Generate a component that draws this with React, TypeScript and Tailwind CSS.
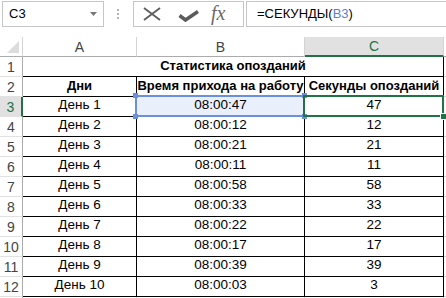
import React from "react";

const rows: [string, string, string][] = [
  ["День 1", "08:00:47", "47"],
  ["День 2", "08:00:12", "12"],
  ["День 3", "08:00:21", "21"],
  ["День 4", "08:00:11", "11"],
  ["День 5", "08:00:58", "58"],
  ["День 6", "08:00:33", "33"],
  ["День 7", "08:00:22", "22"],
  ["День 8", "08:00:17", "17"],
  ["День 9", "08:00:39", "39"],
  ["День 10", "08:00:03", "3"],
];

function RowHead({ n, active }: { n: number; active?: boolean }) {
  return (
    <div
      className={
        "w-[23px] shrink-0 flex items-center justify-center text-[14px] pt-[1px] border-b border-b-[#e1e1e1] " +
        (active
          ? "bg-[#e1e1e1] text-[#217346] border-r-2 border-r-[#217346]"
          : "bg-white text-[#444] border-r border-r-[#ababab]")
      }
    >
      {n}
    </div>
  );
}

export default function App() {
  return (
    <div className="w-[446px] h-[298px] overflow-hidden bg-white font-['Liberation_Sans',Arial,sans-serif] text-black">
      {/* toolbar */}
      <div className="flex h-[37px] items-start pt-[1px]">
        <div className="ml-[2px] w-[102px] h-[26px] border border-[#c6c6c6] flex items-center pl-[6px] pr-[6px]">
          <span className="text-[13px] text-black">C3</span>
          <svg className="ml-auto" width="7" height="4" viewBox="0 0 7 4">
            <path d="M0 0 L7 0 L3.5 4 Z" fill="#777" />
          </svg>
        </div>
        <div className="ml-[13px] mt-[8px] flex flex-col gap-[2px]">
          <div className="w-[2px] h-[2px] bg-[#b5b5b5]" />
          <div className="w-[2px] h-[2px] bg-[#b5b5b5]" />
          <div className="w-[2px] h-[2px] bg-[#b5b5b5]" />
        </div>
        <div className="ml-[14px] w-[111px] h-[26px] border border-[#c6c6c6] flex items-center">
          <svg className="ml-[8px]" width="20" height="14" viewBox="0 0 20 14">
            <path d="M2 1 L18 13 M18 1 L2 13" stroke="#5c5c5c" strokeWidth="1.8" />
          </svg>
          <svg className="ml-[16px] mt-[3px]" width="21" height="12" viewBox="0 0 21 12">
            <path d="M1.5 5.5 L7.5 10 L20 1.5" stroke="#5c5c5c" strokeWidth="3.6" fill="none" strokeLinejoin="miter" />
          </svg>
          <span className="ml-[12px] mb-[2px] text-[20px] italic text-[#6a6a6a] font-['Liberation_Serif',serif] leading-none">
            fx
          </span>
        </div>
        <div className="ml-[2px] flex-1 h-[26px] border border-r-0 border-[#c6c6c6] flex items-center pl-[10px] text-[13px]">
          <span>=СЕКУНДЫ(</span>
          <span className="text-[#5a7fd6]">B3</span>
          <span>)</span>
        </div>
      </div>

      {/* column headers */}
      <div className="flex h-[20px]">
        <div className="w-[23px] shrink-0 border-r border-r-[#d4d4d4] border-b border-b-[#ababab] relative">
          <svg className="absolute right-[3px] bottom-[3px]" width="12" height="12" viewBox="0 0 12 12">
            <path d="M12 0 L12 12 L0 12 Z" fill="#dcdcdc" />
          </svg>
        </div>
        <div className="w-[114px] shrink-0 border-r border-r-[#d4d4d4] border-b border-b-[#ababab] flex items-center justify-center text-[14px] text-[#444] pt-[1px]">
          A
        </div>
        <div className="w-[168px] shrink-0 border-r border-r-[#d4d4d4] border-b border-b-[#ababab] flex items-center justify-center text-[14px] text-[#444] pt-[1px]">
          B
        </div>
        <div className="w-[139px] shrink-0 bg-[#e1e1e1] border-r border-r-[#d4d4d4] border-b-2 border-b-[#217346] flex items-center justify-center text-[14px] text-[#217346] pt-[1px]">
          C
        </div>
        <div className="flex-1 border-b border-b-[#ababab]" />
      </div>

      {/* row 1 */}
      <div className="flex h-[20px]">
        <RowHead n={1} />
        <div className="w-[421px] shrink-0 border-b border-r border-black flex items-end justify-center pb-[1px] text-[13px] font-bold">
          Статистика опозданий
        </div>
        <div className="flex-1 border-b border-[#d4d4d4]" />
      </div>

      {/* row 2 */}
      <div className="flex h-[20px]">
        <RowHead n={2} />
        <div className="w-[114px] shrink-0 border-b border-r border-black flex items-end justify-center pb-[1px] text-[13px] font-bold">
          Дни
        </div>
        <div className="w-[168px] shrink-0 border-b border-r border-black flex items-end justify-center pb-[1px] text-[13px] font-bold whitespace-nowrap overflow-hidden">
          Время прихода на работу
        </div>
        <div className="w-[139px] shrink-0 border-b border-r border-black flex items-end justify-center pb-[1px] text-[13px] font-bold whitespace-nowrap">
          Секунды опозданий
        </div>
        <div className="flex-1 border-b border-[#d4d4d4]" />
      </div>

      {rows.map(([d, t, s], i) => {
        const active = i === 0;
        return (
          <div key={d} className="flex h-[20px]">
            <RowHead n={i + 3} active={active} />
            <div className="w-[114px] shrink-0 border-b border-r border-black flex items-end justify-center pb-[1px] text-[13.5px]">
              {d}
            </div>
            <div
              className={
                "w-[168px] shrink-0 border-b border-r border-black flex items-end justify-center pb-[1px] text-[13.5px] relative " +
                (active ? "bg-[#eaf0fb]" : "")
              }
            >
              {t}
              {active && (
                <div className="absolute -left-[2px] -top-[2px] -right-[1px] -bottom-[1px] border-2 border-[#6a8fdc] z-10">
                  <div className="absolute -left-[4px] -top-[4px] w-[5px] h-[5px] bg-[#6a8fdc]" />
                  <div className="absolute -left-[4px] -bottom-[4px] w-[5px] h-[5px] bg-[#6a8fdc]" />
                  <div className="absolute -right-[4px] -top-[4px] w-[5px] h-[5px] bg-[#6a8fdc] z-30" />
                  <div className="absolute -right-[4px] -bottom-[4px] w-[5px] h-[5px] bg-[#6a8fdc] z-30" />
                </div>
              )}
            </div>
            <div className="w-[139px] shrink-0 border-b border-r border-black flex items-end justify-center pb-[1px] text-[13.5px] relative">
              {s}
              {active && (
                <div className="absolute -left-[2px] -top-[2px] -right-[1px] -bottom-[1px] border-2 border-[#217346] z-20">
                  <div className="absolute -right-[5px] -bottom-[5px] w-[7px] h-[7px] bg-[#217346] border border-white" />
                </div>
              )}
            </div>
            <div className="flex-1 border-b border-[#d4d4d4]" />
          </div>
        );
      })}
      <div className="flex h-[10px]">
        <div className="w-[23px] shrink-0 border-r border-r-[#ababab]" />
        <div className="w-[114px] shrink-0 border-r border-[#d4d4d4]" />
        <div className="w-[168px] shrink-0 border-r border-[#d4d4d4]" />
        <div className="w-[139px] shrink-0 border-r border-[#d4d4d4]" />
      </div>
    </div>
  );
}
